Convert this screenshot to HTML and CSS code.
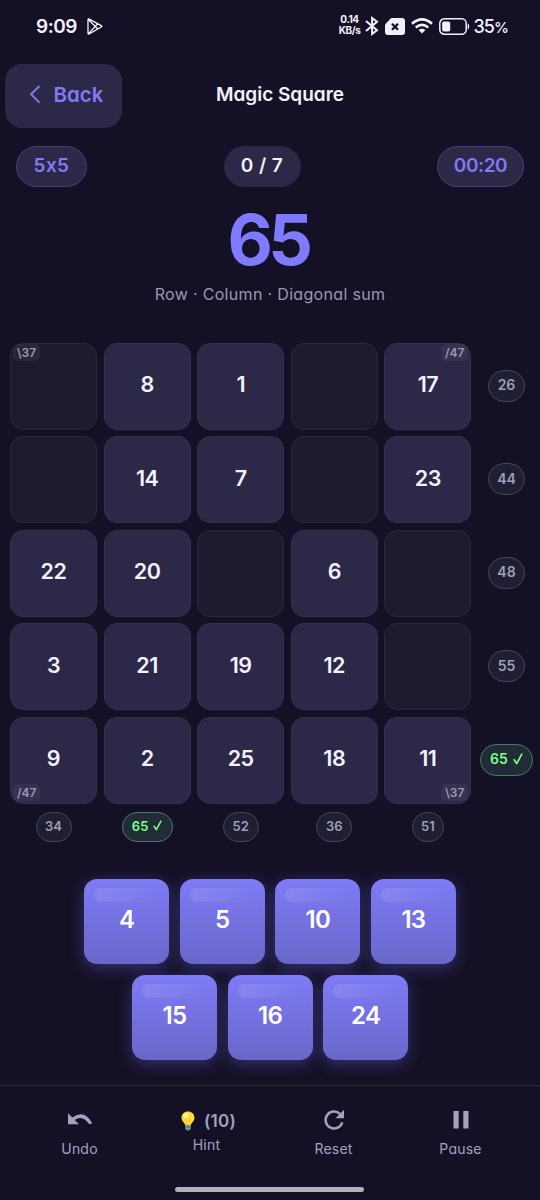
FILE: index.html
```html
<!DOCTYPE html>
<html lang="en">
<head>
  <meta charset="UTF-8" />
  <meta name="viewport" content="width=device-width, initial-scale=1.0"/>
  <title>Magic Square</title>
  <link rel="stylesheet" href="styles.css">
</head>
<body>
  <svg class="defs" width="0" height="0">
    <symbol id="check" viewBox="0 0 10 12">
      <path d="M1.2 6.8 3.7 10.6 8.8 1.2" fill="none" stroke="currentColor" stroke-width="1.7" stroke-linecap="round" stroke-linejoin="round"/>
    </symbol>
  </svg>

  <div class="status-bar">
    <span class="clock">9:09</span>
    <svg class="play" width="16" height="17" viewBox="0 0 16 17" fill="none" stroke="#f1f0fa" stroke-width="1.3" stroke-linejoin="round">
      <path d="M1 1.8Q1 .6 2.2 1.1L14.2 7.6Q15.4 8.3 14.2 9L2.2 15.9Q1 16.3 1 15ZM1.4 1.5 10.8 11M1.4 15.6 10.8 5.8"/>
    </svg>
    <div class="status-right">
      <span class="speed">0.14<br>KB/s</span>
      <svg class="bluetooth" width="14" height="20" viewBox="0 0 14 20" fill="none" stroke="#f1f0fa" stroke-width="2">
        <path d="M1 5 12 14.3 7.1 18V2L12 5.7 1 15"/>
      </svg>
      <svg class="sim" width="20" height="17" viewBox="0 0 20 17">
        <path d="M5.2.9Q6 0 7.2 0H17q3 0 3 3v11q0 3-3 3H3q-3 0-3-3V7.8Q0 6.5.9 5.5Z" fill="#f1f0fa"/>
        <path d="m7 5.8 6 6m0-6-6 6" stroke="#141126" stroke-width="2.3"/>
      </svg>
      <svg class="wifi" width="22" height="16" viewBox="0 0 22 16" fill="none" stroke="#f1f0fa" stroke-width="2.7">
        <path d="M1 5.7Q11-3 21 5.7M4.8 9.5q6.2-5.3 12.400 0"/>
        <path d="M11 15.5 7.600 12.100q3.400-2.800 6.800 0Z" fill="#f1f0fa" stroke="none"/>
      </svg>
      <svg class="battery" width="31" height="17" viewBox="0 0 31 17">
        <rect x=".8" y=".8" width="26.400" height="15.400" rx="4.500" fill="none" stroke="#f1f0fa" stroke-width="1.500"/>
        <rect x="3.200" y="3.500" width="8" height="10" rx="1.800" fill="#f1f0fa"/>
        <path d="M28.700 5.500q1.500.6 1.500 3t-1.500 3z" fill="#f1f0fa"/>
      </svg>
      <span class="percent">35<small>%</small></span>
    </div>
  </div>

  <header class="header">
    <button class="back">
      <svg width="12" height="19" viewBox="0 0 12 19"><path d="M10 1.5 2 9.3l8 7.8" fill="none" stroke="currentColor" stroke-width="1.9" stroke-linecap="round"/></svg>
      <span>Back</span>
    </button>
    <h1>Magic Square</h1>
  </header>

  <div class="info">
    <span class="chip size">5x5</span>
    <span class="chip moves">0 / 7</span>
    <span class="chip timer">00:20</span>
  </div>

  <div class="target">65</div>
  <div class="subtitle">Row · Column · Diagonal sum</div>

  <main class="board">
    <div class="cell empty"><span class="diag top left">\37</span></div>
    <div class="cell">8</div>
    <div class="cell">1</div>
    <div class="cell empty"></div>
    <div class="cell">17<span class="diag top right">/47</span></div>
    <div class="row-sum"><span class="sum">26</span></div>

    <div class="cell empty"></div>
    <div class="cell">14</div>
    <div class="cell">7</div>
    <div class="cell empty"></div>
    <div class="cell">23</div>
    <div class="row-sum"><span class="sum">44</span></div>

    <div class="cell">22</div>
    <div class="cell">20</div>
    <div class="cell empty"></div>
    <div class="cell">6</div>
    <div class="cell empty"></div>
    <div class="row-sum"><span class="sum">48</span></div>

    <div class="cell">3</div>
    <div class="cell">21</div>
    <div class="cell">19</div>
    <div class="cell">12</div>
    <div class="cell empty"></div>
    <div class="row-sum"><span class="sum">55</span></div>

    <div class="cell">9<span class="diag bottom left">/47</span></div>
    <div class="cell">2</div>
    <div class="cell">25</div>
    <div class="cell">18</div>
    <div class="cell">11<span class="diag bottom right">\37</span></div>
    <div class="row-sum"><span class="sum done">65 <svg width="10" height="12"><use href="#check"/></svg></span></div>

    <div class="col-sum"><span class="sum">34</span></div>
    <div class="col-sum"><span class="sum done">65 <svg width="9" height="11"><use href="#check"/></svg></span></div>
    <div class="col-sum"><span class="sum">52</span></div>
    <div class="col-sum"><span class="sum">36</span></div>
    <div class="col-sum"><span class="sum narrow">51</span></div>
  </main>

  <section class="tiles">
    <button class="tile">4</button>
    <button class="tile">5</button>
    <button class="tile">10</button>
    <button class="tile">13</button>
    <button class="tile">15</button>
    <button class="tile">16</button>
    <button class="tile">24</button>
  </section>

  <footer class="toolbar">
    <div class="tool">
      <div class="tool-icon">
        <svg width="26" height="24" viewBox="0 0 26 24"><path d="M1 5.2V16.300H12L7.700 12Q15.500 6.200 22.200 16.300L25.300 15.300Q17.200.8 5.400 9.600Z" fill="currentColor"/></svg>
      </div>
      <span>Undo</span>
    </div>
    <div class="tool hint">
      <div class="tool-icon">
        <svg width="14" height="20" viewBox="0 0 14 20">
          <path d="M7 .5C3.200.5.5 3.200.5 6.700.5 10.200 3.500 11 4.200 14.500H9.800C10.500 11 13.500 10.200 13.500 6.700 13.500 3.200 10.800.5 7 .5Z" fill="#fcdc3a"/>
          <path d="M5.500 14.200 4.800 8.500 7 9.500 9.200 8.500 8.500 14.200" fill="none" stroke="#e9b92c" stroke-width=".6"/>
          <ellipse cx="5" cy="4.500" rx="2.400" ry="2.200" fill="#fff59a"/>
          <path d="M4.200 14.200h5.600v3.300Q9 19.500 7 19.500t-2.800-2Z" fill="#6f9a9c"/>
          <path d="M4.200 16.200h5.600" stroke="#466b78" stroke-width=".8"/>
        </svg>
        <b>(10)</b>
      </div>
      <span>Hint</span>
    </div>
    <div class="tool">
      <div class="tool-icon">
        <svg width="22" height="22" viewBox="0 0 22 22"><path d="M19.300 13.200A8.500 8.500 0 1 1 17 4.900L18.500 6.300" fill="none" stroke="currentColor" stroke-width="2.500"/><path d="M21 .8V9.300H12.500Z" fill="currentColor"/></svg>
      </div>
      <span>Reset</span>
    </div>
    <div class="tool">
      <div class="tool-icon">
        <svg width="16" height="18" viewBox="0 0 16 18"><path d="M.5 0h5.200v17.500H.5zM10.300 0h5.200v17.500h-5.200z" fill="currentColor"/></svg>
      </div>
      <span>Pause</span>
    </div>
  </footer>
  <div class="home-bar"></div>
</body>
</html>
```
FILE: styles.css
```css
* {
  box-sizing: border-box;
}

body {
  margin: 0;
  width: 540px;
  height: 1200px;
  overflow: hidden;
  display: flex;
  flex-direction: column;
  background: #141126;
  color: #f3f1fc;
  font-family: Inter, "Noto Sans", sans-serif;
  font-feature-settings: "cv11", "calt" 0;
}

button {
  font: inherit;
  font-feature-settings: inherit;
  border: none;
  padding: 0;
}

svg {
  display: block;
  flex: none;
}

.defs {
  position: absolute;
}

.status-bar {
  display: flex;
  align-items: center;
  height: 52px;
  padding: 0 32px 0 36px;
}

.clock {
  font-size: 19px;
  font-weight: 600;
  letter-spacing: -0.5px;
}

.play {
  margin-left: 10px;
}

.status-right {
  display: flex;
  align-items: center;
  margin-left: auto;
}

.speed {
  padding-bottom: 2px;
  font-size: 10px;
  line-height: 11px;
  font-weight: 700;
  text-align: center;
  letter-spacing: -0.4px;
}

.bluetooth {
  margin-left: 5px;
}

.sim {
  margin-left: 6px;
}

.wifi {
  margin-left: 6px;
}

.battery {
  margin-left: 6px;
}

.percent {
  margin-left: 3px;
  font-size: 18px;
  font-weight: 500;
  letter-spacing: -0.9px;
}

.percent small {
  font-size: 15px;
}

.header {
  display: grid;
  grid-template-columns: 1fr auto 1fr;
  align-items: center;
  margin-top: 11.5px;
  padding: 0 5px;
}

.header h1 {
  margin: 0 0 2px 20px;
  font-size: 19px;
  font-weight: 600;
}

.back {
  display: flex;
  align-items: center;
  justify-content: center;
  gap: 13px;
  width: 117px;
  height: 64px;
  padding: 0 0 2px 5px;
  border-radius: 17px;
  background: #2c2847;
  color: #7f7bf5;
  font-size: 20.5px;
  font-weight: 600;
}

.info {
  display: flex;
  justify-content: space-between;
  margin-top: 18px;
  padding: 0 16px;
}

.chip {
  display: flex;
  align-items: center;
  justify-content: center;
  height: 41px;
  padding-bottom: 1px;
  border-radius: 21px;
  background: #2c2847;
  font-size: 19px;
  font-weight: 600;
}

.size,
.timer {
  border: 1px solid #45417c;
  color: #7f7bf5;
}

.size {
  width: 71px;
  letter-spacing: 0.4px;
}

.moves {
  width: 77px;
  letter-spacing: 0.4px;
}

.timer {
  width: 87px;
  letter-spacing: -0.4px;
}

.target {
  margin-top: 22px;
  height: 62px;
  line-height: 62px;
  font-size: 70px;
  font-weight: 700;
  text-align: center;
  color: #7f7bff;
  letter-spacing: -4.5px;
  text-indent: -4px;
}

.subtitle {
  margin-top: 13px;
  height: 20px;
  line-height: 20px;
  font-size: 16px;
  letter-spacing: 0.32px;
  text-align: center;
  color: #9b98b4;
}

.board {
  display: grid;
  grid-template-columns: repeat(5, 87px) 57px;
  grid-template-rows: repeat(5, 87px) 32px;
  gap: 6.6px;
  margin-top: 39px;
  padding-left: 10px;
}

.cell {
  position: relative;
  display: flex;
  align-items: center;
  justify-content: center;
  padding-bottom: 4px;
  border: 1px solid #343050;
  border-radius: 13px;
  background: #2c2847;
  font-size: 21.5px;
  font-weight: 600;
  letter-spacing: -0.5px;
}

.empty {
  border-color: #2b283d;
  background: #1e1b30;
}

.diag {
  position: absolute;
  padding: 0 4px;
  height: 17px;
  line-height: 17px;
  border-radius: 5px;
  background: rgba(255, 255, 255, 0.05);
  color: #9c99b5;
  font-size: 12px;
  font-weight: 600;
  letter-spacing: 0;
}

.top {
  top: 0;
}

.bottom {
  bottom: 2px;
}

.left {
  left: 2px;
}

.right {
  right: 2px;
}

.row-sum,
.col-sum {
  display: flex;
  justify-content: center;
}

.row-sum {
  align-items: center;
}

.col-sum {
  margin-top: 1.5px;
}

.sum {
  display: flex;
  align-items: center;
  justify-content: center;
  gap: 5px;
  flex: none;
  width: 37px;
  height: 32px;
  margin-bottom: 1px;
  padding-bottom: 2px;
  border: 1.5px solid #474558;
  border-radius: 17px;
  background: #1f1f33;
  color: #a09db8;
  font-size: 14px;
  font-weight: 600;
}

.col-sum .sum {
  width: 36px;
  height: 30px;
  font-size: 13px;
}

.col-sum .narrow {
  width: 32px;
}

.done,
.col-sum .done {
  width: 53px;
  border-color: #4b7a60;
  background: #202c36;
  color: #7dff8b;
}

.col-sum .done {
  width: 51px;
}

.tiles {
  display: flex;
  flex-wrap: wrap;
  justify-content: center;
  gap: 10.6px;
  margin-top: 36.5px;
  padding: 0 80px;
}

.tile {
  position: relative;
  width: 85px;
  height: 85px;
  padding-bottom: 4px;
  border-radius: 13px;
  background: linear-gradient(#7f7bf6, #6a67ca);
  box-shadow: 0 4px 15px rgba(108, 104, 230, 0.38);
  color: #fff;
  font-size: 24px;
  font-weight: 600;
  letter-spacing: -0.7px;
}

.tile::before {
  content: "";
  position: absolute;
  top: 9px;
  left: 10px;
  right: 10px;
  height: 14px;
  border-radius: 8px;
  background: linear-gradient(90deg, rgba(255, 255, 255, 0.1), rgba(255, 255, 255, 0));
}

.toolbar {
  display: grid;
  grid-template-columns: repeat(4, 127px);
  justify-content: center;
  height: 101px;
  margin-top: 25.5px;
  padding-top: 21px;
  border-top: 1px solid #2c293d;
  color: #a5a2c0;
}

.tool {
  display: flex;
  flex-direction: column;
  align-items: center;
  gap: 7px;
  font-size: 14px;
  line-height: 20px;
  letter-spacing: 0.2px;
}

.tool-icon {
  display: flex;
  align-items: center;
  gap: 9px;
  height: 25px;
}

.hint {
  gap: 3px;
}

.hint .tool-icon {
  padding: 2px 0 0 4px;
}

.tool-icon b {
  font-size: 17px;
  font-weight: 600;
}

.home-bar {
  width: 189px;
  height: 5px;
  margin: 1px auto 0 175px;
  border-radius: 3px;
  background: #b3b1b7;
}
```
